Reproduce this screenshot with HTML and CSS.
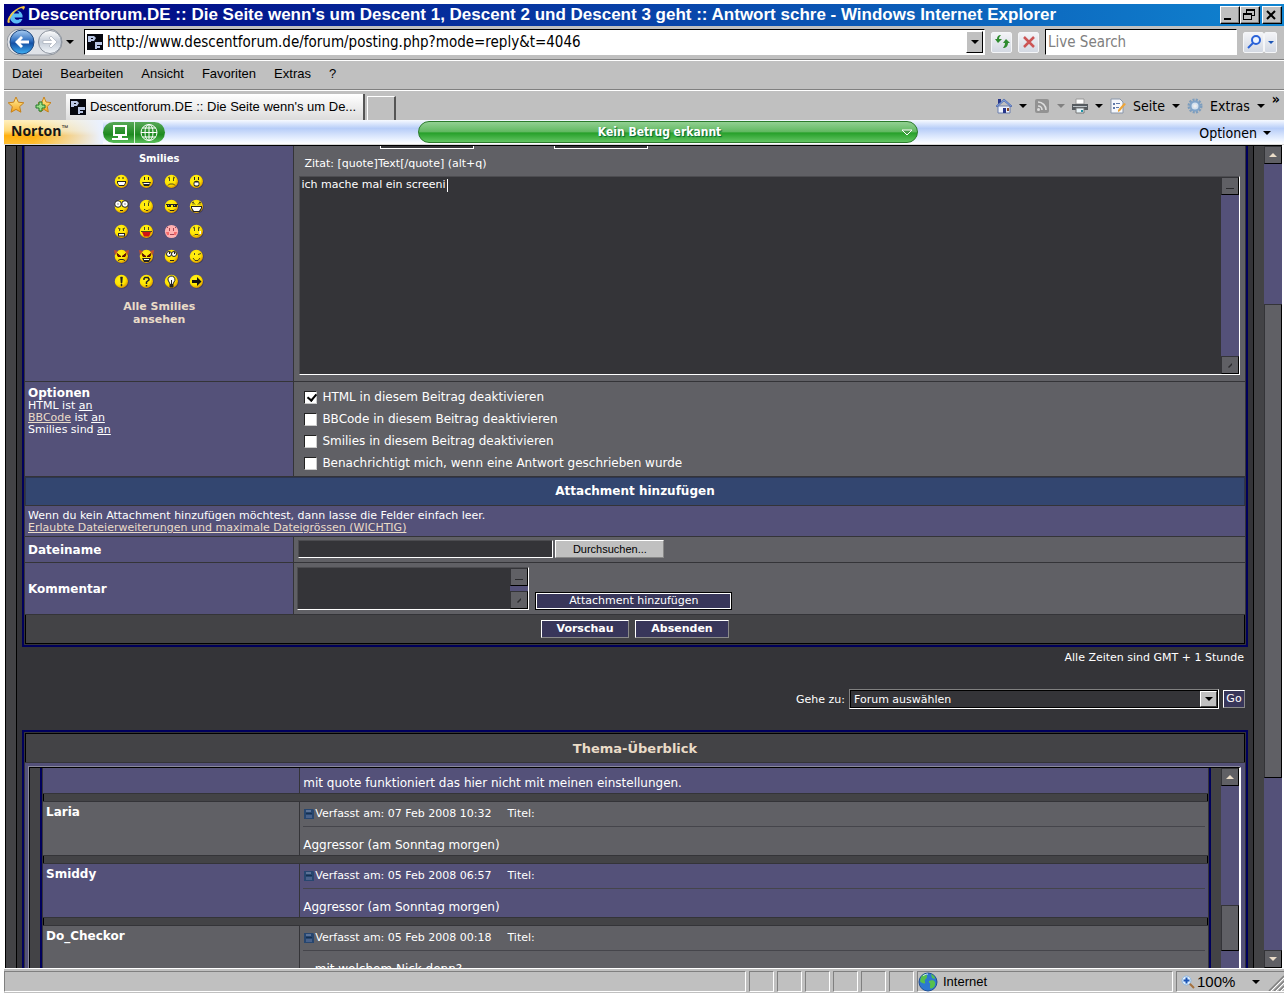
FILE: index.html
```html
<!DOCTYPE html>
<html lang="de">
<head>
<meta charset="utf-8">
<title>Descentforum.DE :: Antwort schreiben</title>
<link rel="stylesheet" href="styles.css">
</head>
<body>
<svg class="defs" aria-hidden="true">
  <defs>
    <radialGradient id="yellow" cx="40%" cy="35%" r="65%"><stop offset="0" stop-color="#fff31a"/><stop offset=".65" stop-color="#ffe400"/><stop offset="1" stop-color="#d99a00"/></radialGradient>
    <linearGradient id="blue" x1="0" y1="0" x2="0" y2="1"><stop offset="0" stop-color="#a9cdf2"/><stop offset=".45" stop-color="#2f6fc0"/><stop offset=".55" stop-color="#1450a5"/><stop offset="1" stop-color="#3fb2f5"/></linearGradient>
    <linearGradient id="pale" x1="0" y1="0" x2="0" y2="1"><stop offset="0" stop-color="#fff"/><stop offset=".5" stop-color="#c3cbd6"/><stop offset="1" stop-color="#f3f7fb"/></linearGradient>
    <linearGradient id="gold" x1="0" y1="0" x2="0" y2="1"><stop offset="0" stop-color="#fff3a0"/><stop offset="1" stop-color="#f5a21a"/></linearGradient>
    <symbol id="face" viewBox="0 0 15 15"><circle cx="8" cy="8" r="6.6" fill="#3b3860"/><circle cx="7.4" cy="7.4" r="6.6" fill="url(#yellow)"/></symbol>
    <symbol id="fav" viewBox="0 0 16 16"><path fill="#05070f" d="M0 0h16v16H0z"/><path fill="#b9c6e4" d="M1 2h6l2 2-2 3H4v1H1zM8 8h7v3H10v1h3v2h-3v1H8z"/><path fill="#05070f" d="M4 4h2v1H4z"/></symbol>
    <symbol id="disk" viewBox="0 0 10 10"><path fill="#27466f" d="M0 0h9l1 1v9H0z"/><path fill="#5b7296" d="M2 1h5v2H2z"/><path fill="#48618a" d="M2 6h6v3H2z"/><path fill="#16304f" d="M2 4h6v1H2z"/></symbol>
  </defs>
</svg>
<div class="window">
  <header class="titlebar">
    <svg class="ielogo" viewBox="0 0 20 20"><path d="M16.500 12.500H8.500a3 3 0 0 0 5 1.500h3A6.500 6.500 0 1 1 16.500 10zM8 8.500h5a2.500 2.500 0 0 0-5 0z" fill="#5bbcf5" fill-rule="evenodd"/><path d="M2 18C-1 14 9 2 18 1c2 1 0 3-1 4 0-4-6-1-10 4-3 4-5 8-2 8z" fill="#f5c83c"/></svg>
    <h1 class="caption">Descentforum.DE :: Die Seite wenn's um Descent 1, Descent 2 und Descent 3 geht :: Antwort schre - Windows Internet Explorer</h1>
    <div class="winbtns">
      <button class="winbtn" aria-label="Minimieren"><svg viewBox="0 0 16 14"><path d="M3 10h7v2H3z"/></svg></button>
      <button class="winbtn" aria-label="Wiederherstellen"><svg viewBox="0 0 16 14"><path d="M5 1h9v7h-3V7h2V3H6v2H5zM2 5h9v7H2zM3 7v4h7V7z" fill-rule="evenodd"/></svg></button>
      <button class="winbtn close" aria-label="Schließen"><svg viewBox="0 0 16 14"><path d="M4 3l8 8M12 3l-8 8" stroke="#000" stroke-width="2"/></svg></button>
    </div>
  </header>

  <div class="addressbar">
    <div class="nav">
      <svg viewBox="0 0 56 28"><rect x="0" y="1" width="55" height="26" rx="13" fill="#dfe2e7" stroke="#8f949c"/><circle cx="15" cy="14" r="12" fill="url(#blue)" stroke="#214a80"/><circle cx="43" cy="14" r="11.500" fill="url(#pale)" stroke="#8a919c"/><path d="M8 14l6-6 2 2-2.500 2.500H22v3h-8.500L16 18l-2 2z" fill="#fff"/><path d="M50 14l-6-6-2 2 2.500 2.500H36v3h8.500L42 18l2 2z" fill="#fff" stroke="#a8afba" stroke-width=".7"/></svg>
      <span class="tri"></span>
    </div>
    <div class="urlbox">
      <svg class="i16"><use href="#fav"/></svg>
      <input class="url" aria-label="Adresse" value="http://www.descentforum.de/forum/posting.php?mode=reply&amp;t=4046">
      <button class="drop" aria-label="Verlauf"><span class="tri"></span></button>
    </div>
    <button class="tool" aria-label="Aktualisieren"><svg viewBox="0 0 16 16"><path d="M7 1C4 1 3 3 3 5H1l3 4 4-4H5c0-2 1-2.500 2-4zM9 14c3 0 5-2 5-5h2l-4-4-3 4h2c0 2-1 3.500-2 5z" fill="#2e8b2e"/></svg></button>
    <button class="tool" aria-label="Abbrechen"><svg viewBox="0 0 16 16"><path d="M3 3l10 10M13 3L3 13" stroke="#cc5555" stroke-width="2.500"/></svg></button>
    <input class="search" aria-label="Suche" placeholder="Live Search">
    <div class="searchbtns">
      <button class="tool" aria-label="Suchen"><svg viewBox="0 0 16 16"><circle cx="10" cy="6" r="4" fill="#eef5ff" stroke="#2a62d8" stroke-width="2"/><path d="M7 9l-5 5" stroke="#2a62d8" stroke-width="2"/></svg></button><button class="tool narrow" aria-label="Suchoptionen"><span class="tri small"></span></button>
    </div>
  </div>

  <nav class="menubar"><span>Datei</span><span>Bearbeiten</span><span>Ansicht</span><span>Favoriten</span><span>Extras</span><span>?</span></nav>

  <div class="tabbar">
    <div class="favs">
      <svg class="i16" viewBox="0 0 16 16"><path d="M8 0l2.300 5.200 5.500.6-4.100 3.800 1.200 5.600L8 12.400l-4.900 2.800 1.200-5.600L.2 5.800l5.500-.6z" fill="url(#gold)" stroke="#c7811a"/></svg>
      <svg class="i16" viewBox="0 0 16 16"><path d="M9 0l2 5 5 .6-3.700 3.800 1 5.600L9 12.400l-4 2.600 1-5.600L3 6l4-1z" fill="url(#gold)" stroke="#c7811a"/><path d="M4 5h3v3h3v3H7v3H4v-3H1V8h3z" fill="#9be08a" stroke="#237a2a"/></svg>
    </div>
    <div class="tab"><svg class="i16"><use href="#fav"/></svg><span>Descentforum.DE :: Die Seite wenn's um De...</span></div>
    <div class="newtab"></div>
    <div class="cmds">
      <svg class="i16" viewBox="0 0 16 16"><path d="M2 8h12v7H2z" fill="#eef2fb" stroke="#6b7fae"/><path d="M8 1L0 8l1 1 7-6 7 6 1-1z" fill="#7fa0dc" stroke="#3a55a0" stroke-width=".6"/><path d="M2 1h3v3L2 6zM7 10h3v5H7z" fill="#26358a"/><path d="M11 10h2v3h-2z" fill="#8b4a28"/></svg><span class="tri"></span>
      <svg class="i16" viewBox="0 0 16 16"><rect x="1" y="1" width="14" height="14" rx="2" fill="#929292"/><path d="M4 8a4 4 0 0 1 4 4M4 4a8 8 0 0 1 8 8" fill="none" stroke="#ddd" stroke-width="1.600"/><circle cx="4.500" cy="11.500" r="1.500" fill="#ddd"/></svg><span class="tri dim"></span>
      <svg class="i16" viewBox="0 0 16 16"><path d="M4 1h8v5H4z" fill="#fff" stroke="#999"/><path d="M0 6h16v6H0z" fill="#555b60"/><path d="M1 8h14v1H1z" fill="#bcc3c8"/><path d="M4 10h8v5H4z" fill="#e9f5fa" stroke="#777"/><path d="M9 12h2v2H9z" fill="#1d92a5"/></svg><span class="tri"></span>
      <svg class="i16" viewBox="0 0 16 16"><path d="M1 1h9l3 3v11H1z" fill="#f5f7fb" stroke="#8996aa"/><path d="M3 5h2v2H3zM3 9h2v2H3zM6 5h4v1H6zM6 9h3v1H6z" fill="#5f78a8"/><path d="M14 5l2 1-6 7-2 1 0-2z" fill="#eda437"/></svg><span>Seite</span><span class="tri"></span>
      <svg class="i16" viewBox="0 0 16 16"><circle cx="8" cy="8" r="6" fill="none" stroke="#7d9dbd" stroke-width="3" stroke-dasharray="2 1.140"/><circle cx="8" cy="8" r="4.500" fill="#d3e1ef" stroke="#7fa3c8" stroke-width="2"/><circle cx="8" cy="8" r="1.800" fill="#eee"/></svg><span>Extras</span><span class="tri"></span>
      <b class="more">»</b>
    </div>
  </div>

  <div class="norton">
    <div class="brand"><b>Norton</b><sup>™</sup></div>
    <div class="pillpair">
      <svg viewBox="0 0 62 21"><path d="M31.500 0v21" stroke="#d5f0d5"/><path d="M11 4h12v9H11z" fill="none" stroke="#fff" stroke-width="2"/><path d="M9 17h16M15 15h4" stroke="#fff" stroke-width="2"/><g fill="none" stroke="#fff"><circle cx="46" cy="10.500" r="8"/><ellipse cx="46" cy="10.500" rx="4" ry="8"/><path d="M38 10.500h16M46 2v17M39.500 6h13M39.500 15h13"/></g></svg>
    </div>
    <span class="gap-a"></span>
    <div class="verdict"><span>Kein Betrug erkannt</span><svg viewBox="0 0 12 7"><path d="M1 1h10L6 6z" fill="#4a9a4a" stroke="#fff"/></svg></div>
    <span class="gap-b"></span>
    <div class="nopt"><span>Optionen</span><span class="tri"></span></div>
  </div>

  <div class="viewport">
    <main class="page">
      <div class="sheet">
        <form class="board post">
          <div class="cell side smilies">
            <h2>Smilies</h2>
            <div class="grid">
              <svg viewBox="0 0 15 15"><use href="#face"/><path d="M5 3v2M9 3v2" stroke="#222"/><path d="M3 7h9v2l-2 3H5L3 9z" fill="#222"/><path d="M4 8h7v1l-1 2H5L4 9z" fill="#fff"/></svg>
              <svg viewBox="0 0 15 15"><use href="#face"/><path d="M5.500 3v3M9.500 3v3" stroke="#222"/><path d="M3 8h9l-2 4H5z" fill="#222"/><path d="M4 9h7l-1 1H5z" fill="#fff"/></svg>
              <svg viewBox="0 0 15 15"><use href="#face"/><path d="M5.500 4v3M9.500 4v3M4 4l2-1M9 3l2 1M4 11.500l1.500-1.500h4l1.500 1.500" stroke="#222" stroke-width=".8" fill="none"/></svg>
              <svg viewBox="0 0 15 15"><use href="#face"/><path d="M5.500 3v3M9.500 3v3" stroke="#222"/><circle cx="7.500" cy="9.800" r="3" fill="#222"/><path d="M5.500 8.500h4v2l-1 1h-2l-1-1z" fill="#fff"/></svg>
              <svg viewBox="0 0 15 15"><use href="#face"/><g fill="#fff" stroke="#222"><circle cx="4" cy="5" r="3.300"/><circle cx="11" cy="5" r="3.300"/></g><path d="M3.500 4.500h1v1h-1zM10.500 4.500h1v1h-1zM6 11h3v1H6z" fill="#222"/></svg>
              <svg viewBox="0 0 15 15"><use href="#face"/><path d="M5.500 4v3M9.500 4v3M5 10.500h1l1 1h2l1-1M9 3h2" stroke="#222" stroke-width=".8" fill="none"/></svg>
              <svg viewBox="0 0 15 15"><use href="#face"/><path d="M2 5h12v1h-1v2h-4V6H7v2H3V6H2z" fill="#222"/><path d="M4 6h1v1H4zM10 6h1v1h-1z" fill="#999"/><path d="M5 10.500l1 1h4l1-1" stroke="#222" fill="none"/></svg>
              <svg viewBox="0 0 15 15"><use href="#face"/><path d="M4 5.500l1-1 1 1M9 5.500l1-1 1 1M3 4l2-1M12 4l-2-1" stroke="#222" fill="none"/><path d="M2 7h11v2l-2 4H4L2 9z" fill="#222"/><path d="M3 8h9v1l-2 3H5L3 9z" fill="#fff"/></svg>
              <svg viewBox="0 0 15 15"><use href="#face"/><path d="M4 4l2.500 1M11 4L8.500 5M5.500 5v2M9.500 5v2" stroke="#222" stroke-width=".8"/><path d="M4 9h7v3.500H4z" fill="#222"/><path d="M5 10h5v1.500H5z" fill="#fff"/></svg>
              <svg viewBox="0 0 15 15"><use href="#face"/><path d="M5.500 3v3M9.500 3v3M2 7.500h11" stroke="#222" stroke-width=".8"/><path d="M3 8h9l-2 4.500H5z" fill="#d21414"/></svg>
              <svg viewBox="0 0 15 15"><circle cx="7.500" cy="7.500" r="6.600" fill="#ffb0b0"/><path d="M5.500 4v3M9.500 4v3M6 10.500h4M3 4l1-1M12 4l-1-1" stroke="#8a2a3c" stroke-width=".8"/><path d="M2 8h3v3H3zM10 8h3l-1 3h-2z" fill="#f56a6a"/></svg>
              <svg viewBox="0 0 15 15"><use href="#face"/><path d="M5.500 4v3M9.500 4v3M4 4l2-1M9 3l2 1M5 11.500l1-1h3l1 1" stroke="#222" stroke-width=".8" fill="none"/><path d="M10.500 7h1.500v3h-1.500z" fill="#fff"/></svg>
              <svg viewBox="0 0 15 15"><use href="#face"/><path d="M0 1l4 1-3 4zM15 1l-4 1 3 4z" fill="#c2502e"/><path d="M3 4.500l4 3H4zM12 4.500l-4 3h3z" fill="#7a1408" stroke="#5a0d05"/><path d="M4 11.500l2-1h3l2 1" stroke="#222" fill="none"/></svg>
              <svg viewBox="0 0 15 15"><use href="#face"/><path d="M0 1l4 1-3 4zM15 1l-4 1 3 4z" fill="#c2502e"/><path d="M3 4.500l4 3H4zM12 4.500l-4 3h3z" fill="#7a1408" stroke="#5a0d05"/><path d="M3 9h9l-2 4H5z" fill="#222"/><path d="M5 10h5v1H5z" fill="#fff"/></svg>
              <svg viewBox="0 0 15 15"><use href="#face"/><g fill="#fff" stroke="#222"><circle cx="5" cy="5" r="2.500"/><circle cx="10" cy="5" r="2.500"/></g><path d="M5 3h1v2H5zM10 3h1v2h-1zM6 11h4v1H6z" fill="#222"/></svg>
              <svg viewBox="0 0 15 15"><use href="#face"/><path d="M5.500 4v2M9 5.500l3-1M4 9l2 2.500h3L11 9" stroke="#222" stroke-width=".8" fill="none"/></svg>
              <svg viewBox="0 0 15 15"><use href="#face"/><path d="M6.500 3h2l-.5 6H7zM7 10h1v2H7z" fill="#222" stroke="#222" stroke-width=".5"/></svg>
              <svg viewBox="0 0 15 15"><use href="#face"/><path d="M5 6V4.500L6 3.500h3L10 5v1L7.500 8v2M7.500 11v1.500" stroke="#222" stroke-width="1.500" fill="none"/></svg>
              <svg viewBox="0 0 15 15"><use href="#face"/><path d="M4 6a3.500 3.500 0 1 1 6 2L9 10v3H6v-3L5 8z" fill="#fff" stroke="#222"/><path d="M6 10h3v3H6zM7 6h1v4H7z" fill="#222"/></svg>
              <svg viewBox="0 0 15 15"><use href="#face"/><path d="M3 6h5V3l4.500 4.500L8 12V9H3z" fill="#111"/></svg>
            </div>
            <a class="all" href="#">Alle Smilies ansehen</a>
          </div>
          <div class="cell main editor">
            <div class="fmt">
              <label for="fcolor">Schriftfarbe:</label><select id="fcolor" class="mini"><option>Standard</option></select>
              <label for="fsize">Schriftgröße:</label><select id="fsize" class="mini"><option>Normal</option></select>
              <a class="tags" href="#">Tags schließen</a>
            </div>
            <label class="hint" for="msg">Zitat: [quote]Text[/quote] (alt+q)</label>
            <div class="area big">
              <textarea id="msg">ich mache mal ein screeni</textarea><i class="caret"></i>
              <div class="rail"><span class="knob"><svg viewBox="0 0 16 16"><path d="M4 10h8v1H4z"/></svg></span><span class="knob"><svg viewBox="0 0 16 16"><path d="M6 10l4-4v2l-3 3z"/></svg></span></div>
            </div>
          </div>

          <div class="cell side opts"><h3>Optionen</h3><p>HTML ist <u>an</u><br><a href="#">BBCode</a> ist <u>an</u><br>Smilies sind <u>an</u></p></div>
          <div class="cell main checks">
            <label><input type="checkbox" checked>HTML in diesem Beitrag deaktivieren</label>
            <label><input type="checkbox">BBCode in diesem Beitrag deaktivieren</label>
            <label><input type="checkbox">Smilies in diesem Beitrag deaktivieren</label>
            <label><input type="checkbox">Benachrichtigt mich, wenn eine Antwort geschrieben wurde</label>
          </div>

          <h3 class="head">Attachment hinzufügen</h3>
          <div class="cell note">Wenn du kein Attachment hinzufügen möchtest, dann lasse die Felder einfach leer.<br><a href="#">Erlaubte Dateierweiterungen und maximale Dateigrössen (WICHTIG)</a></div>

          <div class="cell side mid"><label for="file">Dateiname</label></div>
          <div class="cell main row"><input id="file" class="file"><button type="button" class="browse">Durchsuchen...</button></div>

          <div class="cell side mid"><label for="comment">Kommentar</label></div>
          <div class="cell main row comment">
            <div class="area small">
              <textarea id="comment"></textarea>
              <div class="rail"><span class="knob"><svg viewBox="0 0 16 16"><path d="M4 10h8v1H4z"/></svg></span><span class="knob"><svg viewBox="0 0 16 16"><path d="M6 10l4-4v2l-3 3z"/></svg></span></div>
            </div>
            <button type="button" class="btn attach">Attachment hinzufügen</button>
          </div>
          <div class="foot"><button type="button" class="btn strong">Vorschau</button><button type="button" class="btn strong send">Absenden</button></div>
        </form>

        <p class="times">Alle Zeiten sind GMT + 1 Stunde</p>
        <div class="jump">
          <label for="jump">Gehe zu:</label>
          <div class="pick"><select id="jump"><option>Forum auswählen</option></select><span class="arrow"><span class="tri"></span></span></div>
          <button type="button" class="btn go">Go</button>
        </div>

        <section class="board review">
          <h2 class="topic">Thema-Überblick</h2>
          <div class="frame">
            <div class="inner">
              <div class="posts">
                <article class="entry alt first"><div class="who"></div><div class="what"><p>mit quote funktioniert das hier nicht mit meinen einstellungen.</p></div></article>
                <div class="sep"></div>
                <article class="entry"><div class="who">Laria</div><div class="what"><div class="meta"><svg><use href="#disk"/></svg><span>Verfasst am: 07 Feb 2008 10:32</span><span>Titel:</span></div><p>Aggressor (am Sonntag morgen)</p></div></article>
                <div class="sep"></div>
                <article class="entry alt"><div class="who">Smiddy</div><div class="what"><div class="meta"><svg><use href="#disk"/></svg><span>Verfasst am: 05 Feb 2008 06:57</span><span>Titel:</span></div><p>Aggressor (am Sonntag morgen)</p></div></article>
                <div class="sep"></div>
                <article class="entry"><div class="who">Do_Checkor</div><div class="what"><div class="meta"><svg><use href="#disk"/></svg><span>Verfasst am: 05 Feb 2008 00:18</span><span>Titel:</span></div><p>...mit welchem Nick denn?</p></div></article>
              </div>
            </div>
            <div class="rail tall"><span class="knob"><svg viewBox="0 0 16 16"><path class="cream" d="M4 10h8L8 6z"/></svg></span><span class="free-a"></span><span class="thumb"></span><span class="free-b"></span></div>
          </div>
        </section>
      </div>
    </main>
    <div class="rail outer"><span class="knob"><svg viewBox="0 0 16 16"><path class="cream" d="M4 10h8L8 6z"/></svg></span><span class="free-a"></span><span class="thumb"></span><span class="free-b"></span><span class="knob"><svg viewBox="0 0 16 16"><path class="cream" d="M4 6h8l-4 4z"/></svg></span></div>
  </div>

  <footer class="status">
    <span class="pane grow"></span><span class="pane"></span><span class="pane"></span><span class="pane"></span><span class="pane"></span><span class="pane"></span><span class="pane"></span>
    <span class="pane zone"><svg viewBox="0 0 20 20"><circle cx="10" cy="10" r="9" fill="#2d78d0" stroke="#1d4e96"/><path d="M3 5c3-4 7-3 6 0s-3 2-2 5-4 1-5-1zM11 9c4-2 7 0 6 4s-6 5-5 1-2-3-1-5zM13 2c3 1 4 3 4 5l-3-1z" fill="#57c04c"/><path d="M5 4c1-1 3-2 5-2" stroke="#cfe8ff" fill="none"/></svg>Internet</span>
    <span class="pane zoom"><svg viewBox="0 0 14 14"><path d="M8 8l5 5" stroke="#a5703c" stroke-width="2"/><circle cx="5.500" cy="5.500" r="4.500" fill="#dff0ff" stroke="#8fb6de"/><path d="M5.500 2.500v6M2.500 5.500h6" stroke="#1c55b5" stroke-width="2"/></svg><span>100%</span><span class="tri"></span>
      <svg class="grip" viewBox="0 0 16 16"><path d="M1 16L16 1M6 16L16 6M11 16l5-5" stroke="#808080" stroke-width="1.500"/><path d="M3 16L16 3M8 16l8-8M13 16l3-3" stroke="#fff"/></svg></span>
  </footer>
</div>
</body>
</html>
```

FILE: styles.css
```css
:root {
  --face: #c0c0c0;
  --ink: #343438;
  --panel: #434346;
  --grey: #606065;
  --violet: #545179;
  --navy: #00005c;
  --cream: #eadcc8;
  --verdana: "DejaVu Sans", sans-serif;
  --tahoma: "DejaVu Sans Condensed", "Noto Sans", sans-serif;
  --sans: "Liberation Sans", sans-serif;
}
* { box-sizing: border-box; }
body { margin: 0; background: #fff; font-family: var(--verdana); font-size: 11px; color: #fff; }
h1, h2, h3, p { margin: 0; }
button, input, select, textarea { font: inherit; color: inherit; margin: 0; padding: 0; border-radius: 0; }
svg { display: block; flex: none; }
.defs { position: absolute; width: 0; height: 0; }
.window { height: 100vh; padding: 4px; display: flex; flex-direction: column; color: #000; }
.i16 { width: 16px; height: 16px; }
.tri { flex: none; border: 4px solid transparent; border-top-color: #000; border-bottom: 0; }
.tri.dim { border-top-color: #808080; }
.tri.small { border-width: 3px; border-bottom: 0; border-top-color: #1c55b5; }

.titlebar { height: 22px; flex: none; display: flex; align-items: center; padding: 0 2px; gap: 2px; background: linear-gradient(90deg, #000080, #1084d0); color: #fff; }
.ielogo { width: 20px; height: 20px; }
.caption { flex: 1; min-width: 0; font: bold 17px/22px var(--sans); white-space: nowrap; overflow: hidden; }
.winbtns { display: flex; }
.winbtn { width: 20px; height: 18px; background: var(--face); border: 1px solid; border-color: #fff #000 #000 #fff; box-shadow: inset -1px -1px #808080; }
.winbtn.close { margin-left: 2px; }
.winbtn svg { width: 16px; height: 14px; }

.addressbar { height: 35px; flex: none; display: flex; align-items: center; gap: 6px; padding: 0 7px 2px 3px; background: var(--face); border-bottom: 1px solid #fff; box-shadow: inset 0 -1px #808080; }
.nav { display: flex; align-items: center; gap: 3px; margin-right: 4px; }
.nav svg { width: 56px; height: 28px; }
.urlbox { flex: 1; display: flex; align-items: center; height: 26px; background: #fff; border: 1px solid; border-color: #000 #fff #fff #000; padding: 1px 1px 1px 2px; }
.url { flex: 1; min-width: 0; border: 0; outline: 0; margin-left: 4px; background: none; font: 15px/22px var(--tahoma); }
.drop { width: 17px; height: 22px; background: var(--face); border: 1px solid; border-color: #fff #000 #000 #fff; display: grid; place-items: center; }
.tool { width: 21px; height: 21px; display: grid; place-items: center; background: linear-gradient(#f3f4f7, #d3d8e2); border: 1px solid #f5f6f8; border-radius: 2px; }
.tool svg { width: 16px; height: 16px; }
.tool.narrow { width: 13px; }
.search { width: 192px; height: 26px; border: 1px solid; border-color: #000 #fff #fff #000; padding: 0 2px; font: 15px/22px var(--tahoma); background: #fff; }
.search::placeholder { color: #808080; opacity: 1; }
.searchbtns { display: flex; }

.menubar { height: 30px; flex: none; display: flex; align-items: center; gap: 18px; padding: 0 8px 3px; background: var(--face); border-bottom: 1px solid #fff; box-shadow: inset 0 -1px #808080; font: 13px/18px var(--sans); }

.tabbar { height: 29px; flex: none; display: flex; align-items: flex-end; background: var(--face); padding-right: 4px; }
.favs { display: flex; gap: 11px; padding: 0 15px 7px 4px; }
.tab { display: flex; align-items: center; gap: 4px; width: 299px; height: 26px; padding: 0 4px; background: linear-gradient(#fff, #dcdcdc); border-right: 2px solid #555; font: 13px/24px var(--sans); white-space: nowrap; }
.newtab { width: 29px; height: 24px; margin-left: 2px; border: 1px solid #fff; border-bottom: 0; border-right: 2px solid #555; }
.cmds { margin-left: auto; height: 29px; display: flex; align-items: center; gap: 7px; font: 14px/20px var(--tahoma); }
.more { align-self: flex-start; font-size: 14px; line-height: 16px; }

.norton { height: 25px; flex: none; display: flex; align-items: center; border-bottom: 1px solid #d8d8d8; background: linear-gradient(#f7faff, #b7cdf8 35%, #e9f1ff 80%, #fff); }
.brand { width: 99px; height: 24px; display: flex; padding-left: 7px; color: #151515; background: linear-gradient(90deg, transparent 30%, #eaf1ff 98%), linear-gradient(#fff0c0, #ffd978 45%, #ffb010 65%, #ffbe30); }
.brand b { font: bold 14px/21px "Open Sans", sans-serif; }
.brand sup { font: 7px/16px var(--sans); }
.pillpair { width: 62px; height: 21px; border-radius: 11px; background: linear-gradient(#57a957, #1d8a20 60%, #5cbf5c); }
.pillpair svg { width: 62px; height: 21px; }
.gap-a { flex: 9; }
.gap-b { flex: 10; }
.verdict { width: 39%; height: 22px; display: flex; align-items: center; padding: 0 4px 0 16px; border: 1px solid #2b7a2b; border-radius: 11px; background: linear-gradient(#92d092, #62b962 48%, #27a02a 55%, #62c462); color: #fff; font: bold 12px/20px var(--tahoma); text-shadow: 1px 1px 1px #063; }
.verdict span { flex: 1; text-align: center; padding-right: 17px; }
.verdict svg { width: 12px; height: 7px; }
.nopt { display: flex; align-items: center; gap: 6px; padding: 2px 13px 0 0; font: 14px/20px var(--tahoma); }

.viewport { flex: 1; min-height: 0; display: flex; margin: 0 2px 0 1px; border-top: 1px solid #000; border-left: 1px solid #000; color: #fff; background: var(--panel); }
.page { flex: 1; min-width: 0; overflow: hidden; padding: 0 10px; }
.sheet { min-height: 100%; padding: 0 5px; border: solid #000; border-width: 0 1px; background: var(--ink); }
.board { border: 2px solid var(--navy); padding: 1px; }
a { color: var(--cream); }

.post { display: grid; grid-template-columns: 22% 1fr; gap: 1px; border-top: 0; padding-top: 0; }
.cell { padding: 4px 3px; background: var(--grey); line-height: 12px; }
.side, .note { background: var(--violet); }
.note, .head, .foot { grid-column: 1 / -1; }
.smilies { display: flex; flex-direction: column; align-items: center; padding-top: 6px; }
.smilies h2 { font-size: 10px; line-height: 13px; }
.grid { display: grid; grid-template-columns: repeat(4, 25px); grid-auto-rows: 25px; place-items: center; margin-top: 4px; }
.grid svg { width: 15px; height: 15px; }
.all { width: 100px; margin-top: 6px; text-align: center; font-weight: bold; font-size: 11px; line-height: 13px; text-decoration: none; }

.editor { padding: 0 5px 6px 5px; overflow: hidden; height: 235px; }
.fmt { display: flex; align-items: center; gap: 4px; height: 20px; margin-top: -17px; padding-left: 5px; white-space: nowrap; }
.fmt label { width: 72px; padding-top: 4px; }
.mini { width: 94px; height: 20px; background: var(--ink); border: 1px solid #fff; }
.fmt .tags { margin-left: 200px; padding-top: 4px; text-decoration: none; }
.hint { display: block; padding: 8px 5px 6px; line-height: 13px; }
.area { position: relative; display: flex; background: var(--ink); border: 1px solid; border-color: #4c4c50 #fff #fff #4c4c50; }
.area textarea { flex: 1; min-width: 0; border: 0; outline: 0; resize: none; background: none; padding: 1px; font-size: 11px; line-height: 14px; overflow: hidden; }
.area.big { height: 199px; }
.caret { position: absolute; left: 147px; top: 2px; width: 1px; height: 13px; background: #fff; }
.rail { width: 18px; flex: none; display: flex; flex-direction: column; justify-content: space-between; background: var(--violet); }
.knob, .thumb { background: var(--grey); border: 1px solid; border-color: var(--ink) #000 #000 var(--ink); }
.knob { height: 18px; flex: none; }
.knob svg { width: 16px; height: 16px; fill: #2b2b2e; }
.knob .cream { fill: var(--cream); }

.opts h3, .mid { font-size: 12px; font-weight: bold; }
.opts h3 { line-height: 14px; }
.checks { display: flex; flex-direction: column; padding: 4px 10px 2px; font-size: 12px; }
.checks label { display: flex; align-items: center; gap: 5px; height: 22px; }
.checks input { appearance: none; width: 13px; height: 13px; background: #fff; border: 1px solid; border-color: #222 #ccc #ccc #222; }
.checks input:checked::after { content: ""; display: block; width: 4px; height: 7px; margin: 0 0 0 4px; border: solid #000; border-width: 0 2px 2px 0; transform: rotate(40deg); }
.head { border: 1px solid #2c3550; border-width: 1px 1px 0; background: #334670; text-align: center; font-size: 12px; line-height: 27px; }
.note { padding: 4px 3px 2px; }
.mid { display: flex; align-items: center; }
.row { display: flex; align-items: center; gap: 2px; padding: 3px 4px 4px 4px; }
.file { width: 255px; height: 18px; border: 1px solid; border-color: #4c4c50 #fff #fff #4c4c50; background: var(--ink); }
.browse { width: 109px; height: 18px; background: var(--face); border: 1px solid; border-color: #fff #888 #888 #fff; color: #000; font: 11px/14px var(--sans); }
.comment { align-items: flex-end; gap: 6px; padding: 4px 4px 4px 3px; }
.area.small { width: 232px; height: 43px; }
.btn { height: 18px; background: #38365a; border: 1px solid; border-color: #fff #8a8a8a #8a8a8a #fff; color: #fff; font-size: 11px; line-height: 14px; }
.attach { width: 197px; border-color: #000; box-shadow: inset 0 0 0 1px #fff; }
.foot { display: flex; justify-content: center; align-items: center; gap: 6px; height: 29px; background: var(--panel); border: 1px solid #000; border-top: 0; }
.strong { width: 88px; font-weight: bold; }
.send { width: 94px; }

.times { padding: 4px 4px 0; text-align: right; line-height: 13px; }
.jump { display: flex; justify-content: flex-end; align-items: center; gap: 4px; padding: 25px 3px 21px 0; }
.pick { position: relative; width: 370px; height: 20px; }
.pick select { appearance: none; width: 100%; height: 20px; padding: 0 4px; background: var(--ink); border: 1px solid; border-color: #808080 #fff #fff #808080; outline: 1px solid #000; outline-offset: -2px; }
.arrow { position: absolute; right: 2px; top: 2px; width: 17px; height: 16px; display: grid; place-items: center; background: var(--face); border: 1px solid; border-color: #fff #404040 #404040 #fff; pointer-events: none; }
.go { width: 22px; }

.review { background: var(--ink); }
.topic { height: 29px; margin-bottom: 5px; background: var(--panel); border: 1px solid #000; border-bottom: 0; text-align: center; font-size: 13px; line-height: 29px; color: var(--cream); }
.frame { display: flex; height: 260px; background: var(--panel); border: solid; border-width: 1px 2px 0 1px; border-color: #000 #fff #000 #000; margin: 0 4px; box-shadow: -1px -1px #8a899c, 0 0 0 4px var(--violet); clip-path: inset(-4px -4px 0 -4px); }
.inner { flex: 1; min-width: 0; padding: 0 10px; }
.posts { border: solid var(--navy); border-width: 0 2px; padding: 0 1px; background: var(--ink); }
.entry { display: grid; grid-template-columns: 22% 1fr; gap: 1px; }
.entry > div { background: var(--grey); padding: 4px 3px; height: 53px; }
.entry.alt > div { background: var(--violet); }
.entry.first > div { height: 25px; }
.entry .who { font-size: 12px; line-height: 13px; font-weight: bold; }
.what p { font-size: 12px; line-height: 16px; padding-top: 10px; }
.first .what p { padding-top: 3px; }
.meta { display: flex; align-items: center; height: 21px; padding-bottom: 5px; border-bottom: 1px solid #45454b; }
.meta svg { width: 10px; height: 10px; margin: 0 1px; }
.meta span + span { margin-left: 16px; }
.sep { height: 7px; margin: 1px 0; background: var(--panel); border: solid #000; border-width: 0 1px; }
.tall .free-a { flex: none; height: 119px; }
.tall .thumb { height: 46px; flex: none; }
.tall .free-b { flex: 1; }
.outer .free-a { flex: 140; }
.outer .thumb { flex: 474; }
.outer .free-b { flex: 172; }

.status { height: 26px; flex: none; display: flex; gap: 3px; padding: 2px 0; background: var(--face); border-top: 1px solid #fff; font: 13px/20px var(--sans); box-shadow: inset 0 -1px #fff; }
.pane { width: 25px; display: flex; align-items: center; border: 1px solid; border-color: #808080 #fff #fff #808080; }
.pane.grow { flex: 1; }
.pane.zone { width: 256px; gap: 5px; }
.zone svg { width: 20px; height: 20px; }
.pane.zoom { width: 108px; gap: 2px; padding-left: 4px; border-right: 0; font-size: 15px; }
.zoom > svg { width: 14px; height: 14px; }
.zoom .tri { margin-left: auto; }
.zoom > .grip { width: 16px; height: 16px; margin-left: 6px; align-self: flex-end; }
```
